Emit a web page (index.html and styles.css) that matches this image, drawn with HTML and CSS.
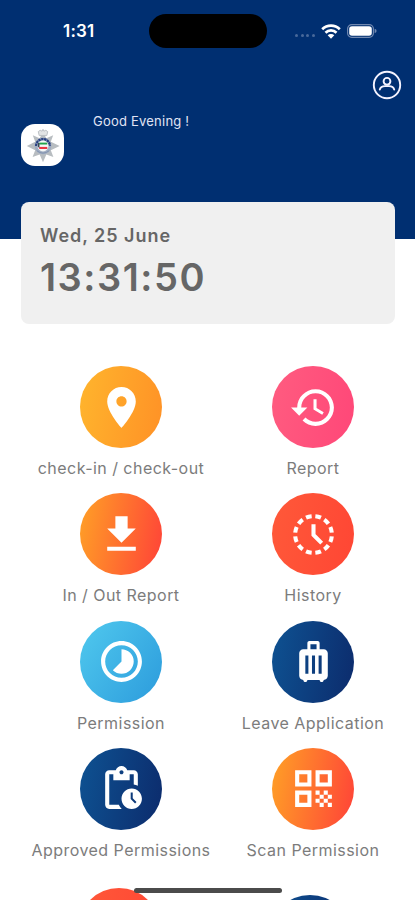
FILE: index.html
```html
<!DOCTYPE html>
<html lang="en">
<head>
<meta charset="utf-8">
<title>Attendance</title>
<link rel="stylesheet" href="styles.css">
</head>
<body>
<div class="screen">
  <header class="header">
    <div class="status">
      <span class="clock">1:31</span>
      <span class="island"></span>
      <span class="signals">
        <span class="dots"><i></i><i></i><i></i><i></i></span>
        <svg class="wifi" viewBox="0 0 20 15"><path fill="none" stroke="#fff" stroke-width="2.7" d="M1.2 5.2a12.6 12.6 0 0 1 17.6 0M4.5 8.7a7.8 7.8 0 0 1 11 0"/><path fill="#fff" d="M10 14.7 6.7 11.3a4.7 4.7 0 0 1 6.6 0z"/></svg>
        <svg class="battery" viewBox="0 0 30 14"><rect x=".6" y=".6" width="25.8" height="12.8" rx="4.2" fill="none" stroke="#7088b0" stroke-width="1.2"/><rect x="2.2" y="2.2" width="22.6" height="9.6" rx="2.8" fill="#fff"/><path fill="#7088b0" d="M27.6 4.8q2 .6 2 2.2t-2 2.2z"/></svg>
      </span>
    </div>
    <div class="account">
      <svg viewBox="0 0 30 30" fill="none" stroke="#f4f3ff" stroke-width="1.9"><circle cx="15" cy="15" r="13.2"/><circle cx="15" cy="11.3" r="3.4"/><path stroke-linecap="round" d="M7.800 19.600c.7-2.600 2.700-3.500 5.200-3.500h4c2.500 0 4.500.9 5.200 3.500"/></svg>
    </div>
    <div class="welcome">
      <div class="badge">
        <svg viewBox="0 0 42 42">
          <path fill="#b8bdc1" d="m21 7.500 3.500 6.500 7.200-3.200-2.500 6.700 9.300 4.500-9.300 4.500 2.700 7-7.400-2.600L21 39l-3.500-8.100-7.400 2.600 2.700-7L4 22l8.800-4.500-2.500-6.700 7.200 3.200z"/>
          <path fill="#e2e4e5" stroke="#babfc3" d="m17 11-1-4 2-1.500 2 1 1-2 1 2 2-1 2 1.500-1 4z"/>
          <circle cx="21" cy="22" r="8.800" fill="#a0adc2"/>
          <path fill="none" stroke="#273f80" stroke-width="2.400" stroke-dasharray="2.500 .6" d="M13.800 22a7.200 7.200 0 0 1 14.400 0"/>
          <circle cx="21" cy="22" r="5.800" fill="#f5f7f6"/>
          <path fill="#24a44b" d="M17 18.500h8.500v2H17z"/><path fill="#ea3442" d="M17 23h8.500v2.200H17z"/><path fill="#3c4858" d="M15.500 19h1.800v5l-1.800-1z"/>
          <path fill="none" stroke="#8291ad" d="M14.500 27q6.500 5 13 0"/>
        </svg>
      </div>
      <div class="greeting">Good Evening !</div>
    </div>
  </header>
  <section class="card">
    <div class="date">Wed, 25 June</div>
    <div class="time">13:31:50</div>
  </section>
  <main class="grid">
    <div class="tile"><div class="disc amber"><svg viewBox="0 0 24 24"><path d="M12 2C8.130 2 5 5.130 5 9c0 5.250 7 13 7 13s7-7.750 7-13c0-3.870-3.130-7-7-7zm0 9.500c-1.380 0-2.500-1.120-2.500-2.500s1.120-2.500 2.500-2.500 2.500 1.120 2.500 2.500-1.120 2.500-2.500 2.500z"/></svg></div><span>check-in / check-out</span></div>
    <div class="tile"><div class="disc pink"><svg viewBox="0 0 24 24"><path d="M13 3c-4.970 0-9 4.030-9 9H1l3.890 3.890.07.14L9 12H6c0-3.870 3.130-7 7-7s7 3.130 7 7-3.130 7-7 7c-1.930 0-3.680-.79-4.940-2.060l-1.420 1.420C8.270 19.990 10.510 21 13 21c4.970 0 9-4.030 9-9s-4.030-9-9-9zm-1 5v5l4.280 2.540.72-1.210-3.500-2.080V8H12z"/></svg></div><span>Report</span></div>
    <div class="tile"><div class="disc orange"><svg viewBox="0 0 24 24"><path d="M5 20h14v-2H5v2zM19 9h-4V3H9v6H5l7 7 7-7z"/></svg></div><span>In / Out Report</span></div>
    <div class="tile"><div class="disc red"><svg viewBox="0 0 24 24"><g fill="none" stroke="#fff" stroke-width="2"><circle cx="12" cy="12" r="9" pathLength="120" stroke-dasharray="6 4" stroke-dashoffset="-2"/><path d="M12 7v5.200l4 4"/></g></svg></div><span>History</span></div>
    <div class="tile"><div class="disc sky"><svg viewBox="0 0 24 24"><path d="M16.240 7.760C15.070 6.590 13.540 6 12 6v6l-4.240 4.240c2.340 2.340 6.140 2.340 8.490 0 2.340-2.340 2.340-6.140-.01-8.480zM12 2C6.480 2 2 6.480 2 12s4.480 10 10 10 10-4.480 10-10S17.520 2 12 2zm0 18c-4.420 0-8-3.580-8-8s3.580-8 8-8 8 3.580 8 8-3.580 8-8 8z"/></svg></div><span>Permission</span></div>
    <div class="tile"><div class="disc navy"><svg viewBox="0 0 24 24"><path d="M17 6h-2V3c0-.55-.45-1-1-1h-4c-.55 0-1 .45-1 1v3H7c-1.100 0-2 .9-2 2v11c0 1.100.9 2 2 2 0 .55.45 1 1 1s1-.45 1-1h6c0 .55.45 1 1 1s1-.45 1-1c1.100 0 2-.9 2-2V8c0-1.100-.9-2-2-2zM9.500 18H8V9h1.500v9zm3.250 0h-1.500V9h1.500v9zm.75-12h-3V3.500h3V6zM16 18h-1.500V9H16v9z"/></svg></div><span>Leave Application</span></div>
    <div class="tile"><div class="disc navy"><svg viewBox="0 0 24 24"><path d="M17 12c-2.760 0-5 2.240-5 5s2.240 5 5 5 5-2.240 5-5-2.240-5-5-5zm1.650 7.350L16.500 17.200V14h1v2.790l1.850 1.850-.7.71zM18 3h-3.180C14.400 1.840 13.300 1 12 1s-2.400.84-2.820 2H6c-1.100 0-2 .9-2 2v15c0 1.100.9 2 2 2h6.110c-.59-.57-1.070-1.250-1.420-2H6V5h2v3h8V5h2v5.080c.71.1 1.380.31 2 .6V5c0-1.100-.9-2-2-2zm-6 2c-.55 0-1-.45-1-1s.45-1 1-1 1 .45 1 1-.45 1-1 1z"/></svg></div><span>Approved Permissions</span></div>
    <div class="tile"><div class="disc orange"><svg viewBox="0 0 24 24"><path d="M3 11h8V3H3v8zm2-6h4v4H5V5zM3 21h8v-8H3v8zm2-6h4v4H5v-4zM13 3v8h8V3h-8zm6 6h-4V5h4v4zM19 19h2v2h-2zM13 13h2v2h-2zM15 15h2v2h-2zM13 17h2v2h-2zM15 19h2v2h-2zM17 17h2v2h-2zM17 13h2v2h-2zM19 15h2v2h-2z"/></svg></div><span>Scan Permission</span></div>
    <div class="tile peek-left"><div class="disc red"></div></div>
    <div class="tile peek-right"><div class="disc navy"></div></div>
  </main>
  <div class="home-bar"></div>
</div>
</body>
</html>
```
FILE: styles.css
```css
* { box-sizing: border-box; }
body { margin: 0; background: #fff; font-family: Inter, "Liberation Sans", sans-serif; }
svg { display: block; }
.screen { position: relative; width: 415px; height: 900px; overflow: hidden; }
.header { height: 239px; background: #002f71; padding-top: 14px; }
.status { height: 34px; display: grid; grid-template-columns: 149px 118px 1fr; align-items: center; color: #fff; }
.clock { padding-left: 63px; font-size: 17px; font-weight: 600; letter-spacing: .2px; }
.island { height: 34px; border-radius: 17px; background: #000; }
.signals { display: flex; align-items: center; padding-left: 28px; }
.dots { display: flex; gap: 2.600px; padding-top: 9px; margin-right: 6.500px; }
.dots i { width: 3px; height: 3px; border-radius: 50%; background: #48699a; }
.wifi { width: 20px; height: 15px; margin-right: 5.500px; }
.battery { width: 30px; height: 14px; }
.account { display: flex; justify-content: flex-end; padding: 22px 13px 0 0; }
.account svg { width: 30px; height: 30px; }
.welcome { display: flex; align-items: flex-start; padding: 12px 0 0 21px; }
.badge { width: 43px; height: 42px; margin-top: 12px; border-radius: 14px; background: #fff; display: grid; place-items: center; }
.badge svg { width: 40px; height: 40px; }
.greeting { margin-left: 29px; font-size: 13px; line-height: 18px; letter-spacing: .22px; color: #e0e4f4; }
.card { position: relative; width: 374px; height: 122px; margin: -37px 0 0 21px; padding: 22px 19px; border-radius: 8px; background: #f0f0f0; color: #666; }
.date { font-size: 18px; line-height: 24px; font-weight: 600; letter-spacing: .97px; }
.time { margin-top: 6px; font-size: 38px; line-height: 46px; font-weight: 600; letter-spacing: 1.550px; }
.grid { display: grid; grid-template-columns: 192px 192px; grid-auto-rows: 127.300px; margin: 42px 0 0 25px; }
.tile { display: flex; flex-direction: column; align-items: center; white-space: nowrap; }
.tile span { margin-top: 9px; font-size: 16px; line-height: 22px; letter-spacing: .46px; color: #7c7c7c; }
.disc { flex: none; width: 82px; height: 82px; border-radius: 50%; display: grid; place-items: center; }
.disc svg { width: 49px; height: 49px; fill: #fff; }
.amber { background: linear-gradient(100deg, #ffb52d, #ff9126); }
.pink { background: linear-gradient(100deg, #ff5c80, #ff4778); }
.orange { background: linear-gradient(100deg, #ffa126, #ff4238); }
.red { background: linear-gradient(100deg, #ff5939, #ff4634); }
.sky { background: linear-gradient(125deg, #50c9ee, #2c9bdc); }
.navy { background: linear-gradient(100deg, #0e5292, #0c2b6c); }
.peek-left { padding: 13px 4px 0 0; }
.peek-right { padding: 20px 6px 0 0; }
.home-bar { position: absolute; left: 134px; bottom: 7px; width: 148px; height: 5px; border-radius: 3px; background: #4b4b4b; }
```
